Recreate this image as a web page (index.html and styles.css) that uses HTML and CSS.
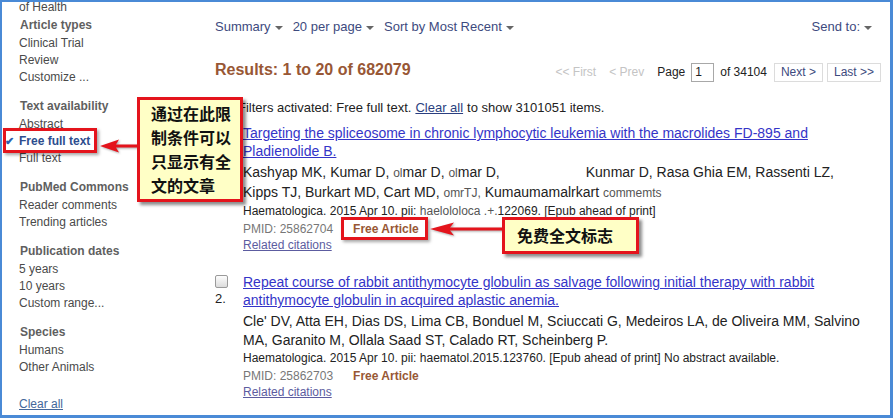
FILE: index.html
```html
<!DOCTYPE html>
<html lang="en">
<head>
  <meta charset="UTF-8">
  <title>PubMed - Free full text</title>
  <link rel="stylesheet" href="styles.css">
</head>
<body>

  <div class="frame">

    <aside class="sidebar">
      <ul class="facet-list top-cut"><li>of Health</li></ul>

      <div class="facet">
        <h4>Article types</h4>
        <ul class="facet-list">
          <li>Clinical Trial</li>
          <li>Review</li>
          <li>Customize ...</li>
        </ul>
      </div>

      <div class="facet">
        <h4>Text availability</h4>
        <ul class="facet-list">
          <li>Abstract</li>
          <li class="selected"><span class="check">&#10004;</span>Free full text</li>
          <li>Full text</li>
        </ul>
      </div>

      <div class="facet">
        <h4>PubMed Commons</h4>
        <ul class="facet-list">
          <li>Reader comments</li>
          <li>Trending articles</li>
        </ul>
      </div>

      <div class="facet">
        <h4>Publication dates</h4>
        <ul class="facet-list">
          <li>5 years</li>
          <li>10 years</li>
          <li>Custom range...</li>
        </ul>
      </div>

      <div class="facet">
        <h4>Species</h4>
        <ul class="facet-list">
          <li>Humans</li>
          <li>Other Animals</li>
        </ul>
      </div>

      <a class="clear-all" href="#">Clear all</a>
    </aside>

    <main class="content">
      <div class="toolbar">
        <span class="drop">Summary<i class="caret"></i></span>
        <span class="drop">20 per page<i class="caret"></i></span>
        <span class="drop">Sort by Most Recent<i class="caret"></i></span>
        <span class="drop send-to">Send to:<i class="caret"></i></span>
      </div>

      <div class="results-head">
        <h2>Results: 1 to 20 of 682079</h2>
        <div class="pager">
          <span class="pg-off pg-first">&lt;&lt; First</span>
          <span class="pg-off pg-prev">&lt; Prev</span>
          <span class="pg-label">Page</span>
          <span class="pg-input">1</span>
          <span class="pg-of">of 34104</span>
          <span class="pg-btn pg-next">Next &gt;</span>
          <span class="pg-btn pg-last">Last &gt;&gt;</span>
        </div>
      </div>

      <p class="filters"><i class="filter-icon"></i>Filters activated: Free full text. <a href="#">Clear all</a> to show 3101051 items.</p>

      <div class="rslt">
        <div class="rslt-side">
          <span class="cbox"></span>
          <span class="num">1.</span>
        </div>
        <div class="rslt-body">
          <a class="title" href="#">Targeting the spliceosome in chronic lymphocytic leukemia with the macrolides FD-895 and Pladienolide B.</a>
          <p class="authors">Kashyap MK, Kumar D, <span class="smudge">ol</span>mar D, <span class="smudge">ol</span>mar D,<span class="blank"></span>Kunmar D, Rasa Ghia EM, Rassenti LZ,<br>Kipps TJ, Burkart MD, Cart MD, <span class="smudge">omrTJ,</span> Kumaumamalrkart <span class="smudge">commemts</span></p>
          <p class="journal">Haematologica. 2015 Apr 10. pii: <span class="smudge">haelololoca .+.</span>122069. [Epub ahead of print]</p>
          <p class="meta">PMID: 25862704<span class="free">Free Article</span></p>
          <a class="related" href="#">Related citations</a>
        </div>
      </div>

      <div class="rslt">
        <div class="rslt-side">
          <span class="cbox"></span>
          <span class="num">2.</span>
        </div>
        <div class="rslt-body">
          <a class="title" href="#">Repeat course of rabbit antithymocyte globulin as salvage following initial therapy with rabbit antithymocyte globulin in acquired aplastic anemia.</a>
          <p class="authors">Cle' DV, Atta EH, Dias DS, Lima CB, Bonduel M, Sciuccati G, Medeiros LA, de Oliveira MM, Salvino MA, Garanito M, Ollala Saad ST, Calado RT, Scheinberg P.</p>
          <p class="journal">Haematologica. 2015 Apr 10. pii: haematol.2015.123760. [Epub ahead of print] No abstract available.</p>
          <p class="meta">PMID: 25862703<span class="free">Free Article</span></p>
          <a class="related" href="#">Related citations</a>
        </div>
      </div>
    </main>

    <!-- annotations drawn over the page -->
    <div class="mark mark-filter"></div>
    <svg class="arrow arrow-filter" width="40" height="14" viewBox="0 0 40 14">
      <polygon points="0,7 19,0.5 16,5.5 40,5.5 40,8.5 16,8.5 19,13.5" />
    </svg>
    <div class="callout callout-filter">通过在此限<br>制条件可以<br>只显示有全<br>文的文章</div>

    <div class="mark mark-free"></div>
    <svg class="arrow arrow-free" width="74" height="14" viewBox="0 0 74 14">
      <polygon points="0,7 24,0.5 20,5.5 74,5.5 74,8.5 20,8.5 24,13.5" />
    </svg>
    <div class="callout callout-free">免费全文标志</div>

  </div>

</body>
</html>
```

FILE: styles.css
```css
body {
  margin: 0;
  font-family: Arial, "Liberation Sans", sans-serif;
  background-color: #fff;
}

.frame {
  position: relative;
  display: flex;
  width: 893px;
  height: 418px;
  box-sizing: border-box;
  border: 2px solid #4a8ad6;
  border-right-width: 3px;
  border-bottom-width: 3px;
  overflow: hidden;
  background: #fff;
}

/* ---------- left facets ---------- */

.sidebar {
  width: 196px;
  flex-shrink: 0;
  padding-left: 17px;
  margin-top: -3px;
  font-size: 12px;
  color: #4a4a4a;
}

.facet-list {
  list-style: none;
  margin: 0;
  padding: 0;
}

.facet-list li {
  line-height: 17px;
}

.top-cut {
  margin-bottom: 1px;
}

.facet {
  margin-bottom: 12px;
}

.facet h4 {
  margin: 0 0 1px 1px;
  font-size: 12px;
  line-height: 17px;
  color: #5f5f5f;
}

.facet-list li.selected {
  font-weight: bold;
  color: #2d4d8e;
}

.check {
  display: inline-block;
  width: 14px;
  margin-left: -14px;
  font-size: 11px;
  color: #2d5fb0;
}

.clear-all {
  display: block;
  margin-top: 20px;
  line-height: 17px;
  color: #44679a;
}

/* ---------- main column ---------- */

.content {
  flex: 1;
  padding: 16px 9px 0 0;
}

.toolbar {
  display: flex;
  gap: 10px;
  padding-right: 9px;
  font-size: 13px;
  line-height: 18px;
  color: #3d4a7e;
}

.send-to {
  margin-left: auto;
}

.caret {
  display: inline-block;
  margin-left: 4px;
  vertical-align: middle;
  border-left: 4px solid transparent;
  border-right: 4px solid transparent;
  border-top: 4px solid #666;
}

.results-head {
  display: flex;
  align-items: center;
  justify-content: space-between;
  height: 22px;
  margin-top: 23px;
}

.results-head h2 {
  margin: 0;
  font-size: 16px;
  color: #985735;
}

.pager {
  display: flex;
  align-items: center;
  font-size: 12px;
  color: #222;
  margin-top: 4px;
}

.pg-off {
  color: #c4c4c4;
}

.pg-prev,
.pg-label {
  margin-left: 13px;
}

.pg-input {
  width: 23px;
  height: 19px;
  margin-left: 6px;
  padding-left: 3px;
  box-sizing: border-box;
  border: 1px solid #a8a8a8;
  line-height: 17px;
  color: #222;
}

.pg-of {
  margin-left: 6px;
}

.pg-btn {
  height: 19px;
  padding: 0 6px;
  box-sizing: border-box;
  border: 1px solid #dcdcdc;
  line-height: 17px;
  color: #3d4a7e;
}

.pg-next {
  margin-left: 7px;
}

.pg-last {
  margin-left: 4px;
}

.filters {
  display: flex;
  align-items: center;
  margin: 18px 0 0;
  font-size: 13px;
  line-height: 18px;
  color: #222;
}

.filters a {
  margin: 0 4px;
  color: #2b3f80;
}

.filter-icon {
  width: 12px;
  height: 12px;
  margin: 0 6px 0 5px;
  background: #999;
  border-radius: 2px;
}

/* ---------- one result ---------- */

.rslt {
  display: grid;
  grid-template-columns: 28px 1fr;
  margin-top: 7px;
}

.rslt + .rslt {
  margin-top: 20px;
}

.rslt-side {
  display: flex;
  flex-direction: column;
  align-items: flex-start;
}

.cbox {
  width: 13px;
  height: 13px;
  margin-top: 2px;
  box-sizing: border-box;
  border: 1px solid #9a9a9a;
  border-radius: 2px;
  background: linear-gradient(#fdfdfd, #dcdcdc);
}

.num {
  margin-top: 2px;
  font-size: 13px;
  line-height: 18px;
  color: #222;
}

.rslt-body .title {
  display: block;
  font-size: 14px;
  line-height: 18px;
  color: #3434c8;
}

.authors {
  margin: 3px 0 0;
  font-size: 14px;
  line-height: 19px;
  color: #222;
}

.blank {
  display: inline-block;
  width: 86px;
}

.smudge {
  font-size: 12px;
  color: #555;
}

.journal {
  margin: 0;
  font-size: 12px;
  line-height: 16px;
  color: #222;
}

.meta {
  margin: 2px 0 0;
  font-size: 12px;
  line-height: 16px;
  color: #777;
}

.free {
  margin-left: 20px;
  font-weight: bold;
  color: #985735;
}

.related {
  display: block;
  font-size: 12px;
  line-height: 16px;
  color: #5c5ca0;
}

/* ---------- annotations ---------- */

.mark {
  position: absolute;
  box-sizing: border-box;
  border: 3px solid #e4141c;
  box-shadow: 2px 2px 3px rgba(0, 0, 0, 0.35);
}

.mark-filter {
  left: 1px;
  top: 126px;
  width: 94px;
  height: 25px;
}

.mark-free {
  left: 339px;
  top: 215px;
  width: 87px;
  height: 23px;
}

.arrow {
  position: absolute;
  fill: #e4141c;
  filter: drop-shadow(1px 1px 1px rgba(0, 0, 0, 0.35));
}

.arrow-filter {
  left: 98px;
  top: 137px;
}

.arrow-free {
  left: 428px;
  top: 220px;
}

.callout {
  position: absolute;
  box-sizing: border-box;
  border: 3px solid #e4141c;
  background: #ffffc6;
  box-shadow: 3px 3px 3px rgba(0, 0, 0, 0.45);
  font-family: "Noto Sans CJK SC", sans-serif;
  font-weight: bold;
  font-size: 16px;
  color: #111;
}

.callout-filter {
  left: 135px;
  top: 95px;
  width: 106px;
  height: 105px;
  padding: 1px 0 0 11px;
  line-height: 24px;
}

.callout-free {
  left: 500px;
  top: 215px;
  width: 137px;
  height: 37px;
  padding-left: 12px;
  line-height: 31px;
}
```
